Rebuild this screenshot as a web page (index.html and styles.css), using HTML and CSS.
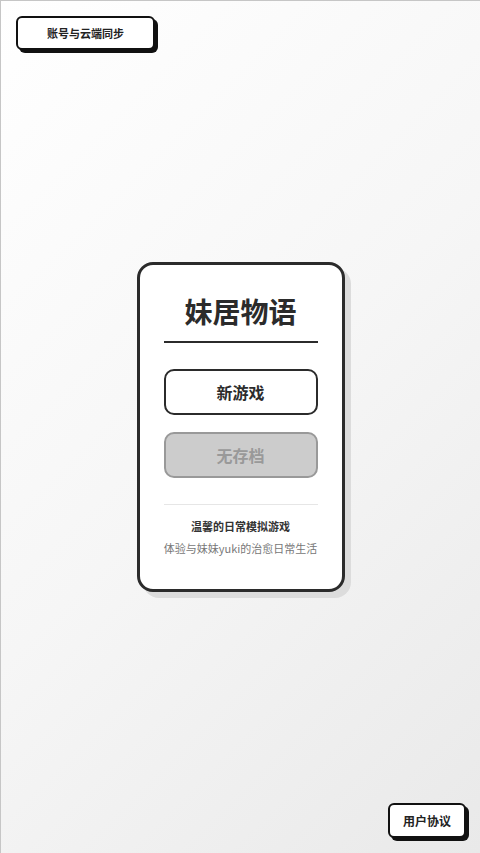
FILE: index.html
```html
<!DOCTYPE html>
<html lang="zh-CN">
<head>
<meta charset="utf-8">
<title>妹居物语</title>
<link rel="stylesheet" href="styles.css">
</head>
<body>
<div class="page">
  <button class="pill-btn sync-btn">账号与云端同步</button>
  <main class="card">
    <h1 class="title">妹居物语</h1>
    <div class="actions">
      <button class="menu-btn">新游戏</button>
      <button class="menu-btn disabled">无存档</button>
    </div>
    <div class="divider"></div>
    <p class="tagline">温馨的日常模拟游戏</p>
    <p class="desc">体验与妹妹yuki的治愈日常生活</p>
  </main>
  <button class="pill-btn terms-btn">用户协议</button>
</div>
</body>
</html>
```
FILE: styles.css
```css
* { box-sizing: border-box; }
html, body { margin: 0; padding: 0; height: 100%; }
body {
  font-family: "Noto Sans CJK SC", "Noto Sans", sans-serif;
  color: #333;
}
.page {
  position: relative;
  height: 100vh;
  border-top: 1px solid #c6c6c6;
  border-left: 1px solid #c6c6c6;
  background: linear-gradient(135deg, #ffffff 0%, #f6f6f6 50%, #e9e9e9 100%);
  display: flex;
  align-items: center;
  justify-content: center;
}
.pill-btn {
  position: absolute;
  background: #fff;
  border: 2px solid #111;
  border-radius: 6px;
  box-shadow: 3px 3px 0 #111;
  font-family: inherit;
  font-weight: 700;
  color: #222;
  padding: 0;
  display: flex;
  align-items: center;
  justify-content: center;
}
.sync-btn {
  top: 15px;
  left: 15px;
  width: 139px;
  height: 34px;
  font-size: 11px;
}
.terms-btn {
  right: 14px;
  bottom: 15px;
  width: 78px;
  height: 35px;
  font-size: 12px;
}
.card {
  width: 208px;
  background: #fff;
  border: 3px solid #2b2b2b;
  border-radius: 16px;
  box-shadow: 6px 6px 0 #dcdcdc;
  padding: 26px 24px 31px;
  display: flex;
  flex-direction: column;
  align-items: stretch;
}
.title {
  margin: 0;
  font-size: 28px;
  font-weight: 700;
  line-height: 40px;
  text-align: center;
  color: #2b2b2b;
  padding-bottom: 10px;
  border-bottom: 2px solid #2b2b2b;
}
.actions {
  margin-top: 26px;
  display: flex;
  flex-direction: column;
  gap: 17px;
}
.menu-btn {
  height: 46px;
  background: #fff;
  border: 2px solid #2b2b2b;
  border-radius: 10px;
  font-family: inherit;
  font-size: 16px;
  font-weight: 700;
  color: #2b2b2b;
  padding: 0;
}
.menu-btn.disabled {
  background: #cccccc;
  border-color: #999;
  color: #999;
}
.divider {
  margin-top: 26px;
  height: 1px;
  background: #e6e6e6;
}
.tagline {
  margin: 11px 0 0;
  font-size: 11px;
  line-height: 20px;
  font-weight: 700;
  text-align: center;
  color: #333;
}
.desc {
  margin: 2px 0 0;
  font-size: 11px;
  line-height: 20px;
  text-align: center;
  color: #777;
}
```
